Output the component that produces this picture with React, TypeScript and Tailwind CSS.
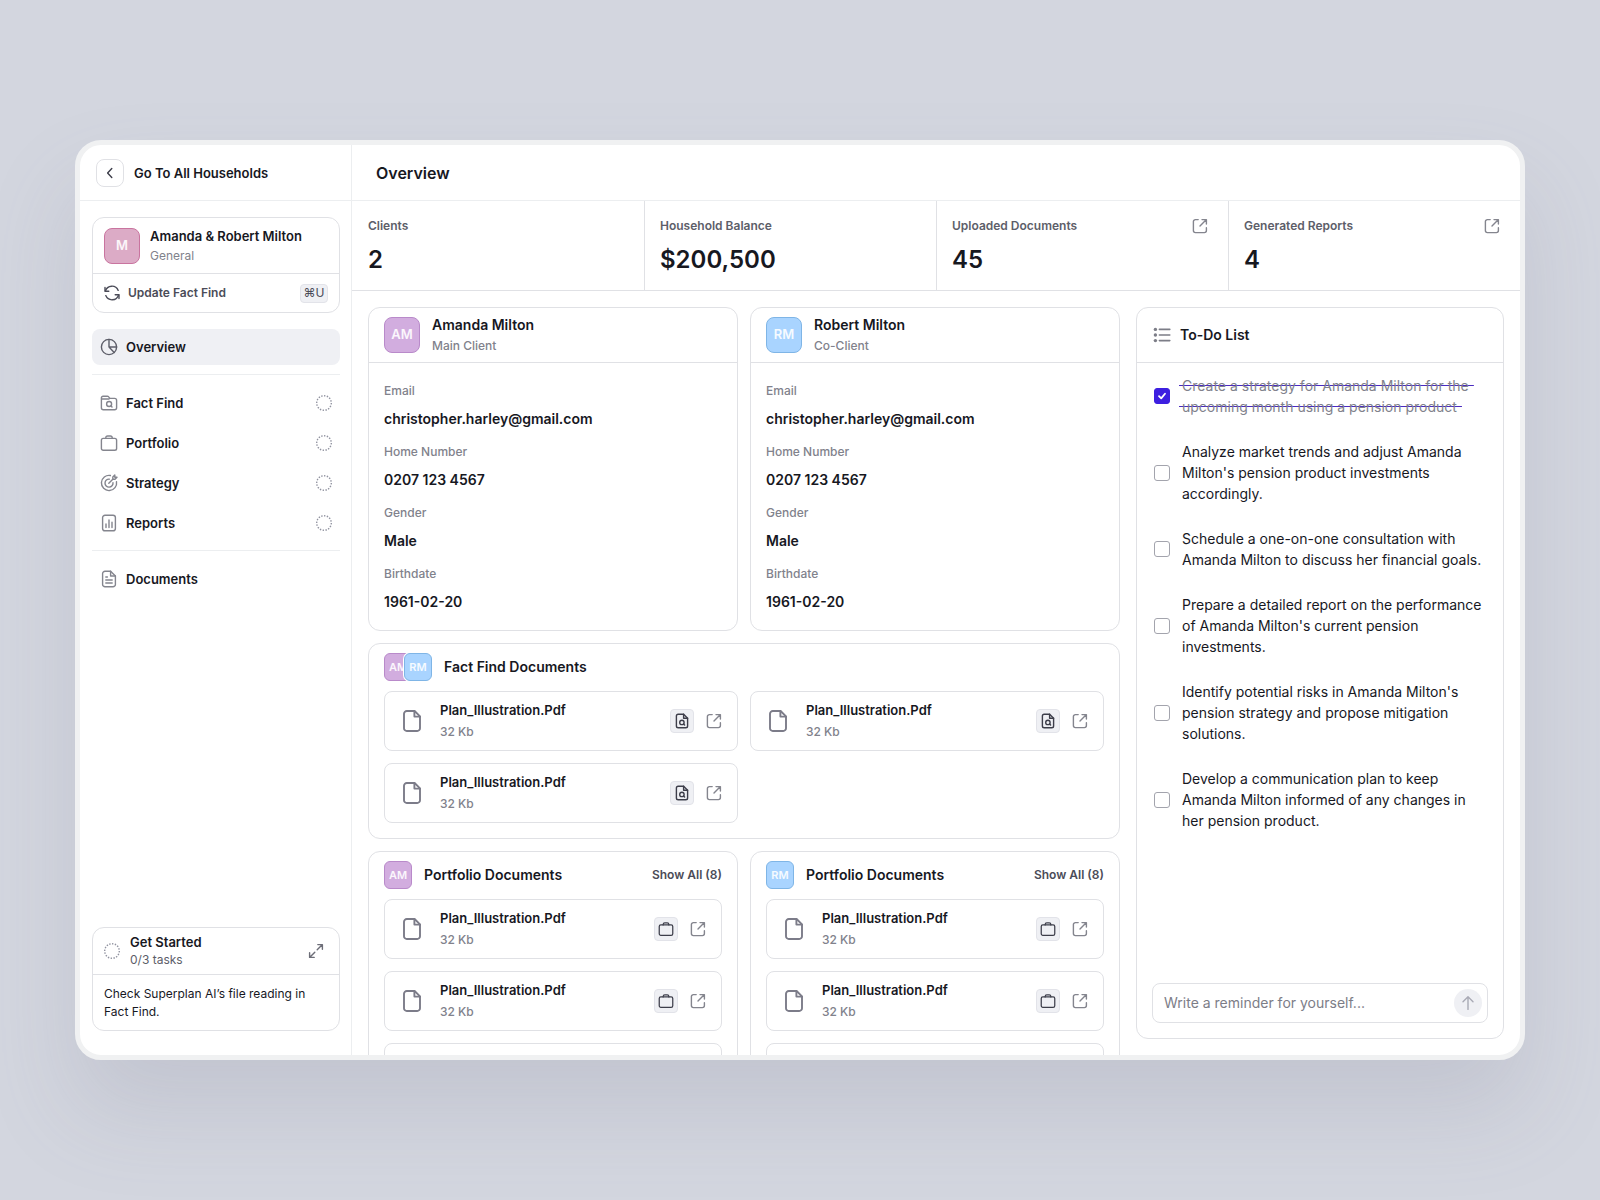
import React, { useState } from 'react';

type IconProps = { className?: string };

const Svg: React.FC<IconProps & { box?: number; stroke?: number; children: React.ReactNode }> = ({
  className = '',
  box = 16,
  stroke = 1.4,
  children,
}) => (
  <svg
    viewBox={`0 0 ${box} ${box}`}
    fill="none"
    stroke="currentColor"
    strokeWidth={stroke}
    strokeLinecap="round"
    strokeLinejoin="round"
    aria-hidden="true"
    className={`shrink-0 ${className}`}
  >
    {children}
  </svg>
);

const Icons = {
  Back: () => (
    <Svg className="size-4" stroke={1.4}>
      <path d="M9.8 3.5 5.6 8l4.2 4.5" />
    </Svg>
  ),
  Refresh: () => (
    <Svg className="size-4">
      <path d="M1 2.4v3.8h3.8" />
      <path d="M1.4 6A6.8 6.8 0 0 1 14.2 5.400" />
      <path d="M15 13.600V9.800h-3.800" />
      <path d="M14.600 10A6.800 6.800 0 0 1 1.800 10.600" />
    </Svg>
  ),
  Pie: () => (
    <Svg className="size-[18px]" box={18}>
      <circle cx="9" cy="9" r="7.6" />
      <path d="M9 1.4V9h7.6M9 9l5.2 5.4" />
    </Svg>
  ),
  FolderSearch: () => (
    <Svg className="size-[18px]" box={18}>
      <path d="M1.4 4.6v9.2a2 2 0 0 0 2 2h11.2a2 2 0 0 0 2-2V6.4a2 2 0 0 0-2-2H10L8.4 2.6a1.4 1.4 0 0 0-1-.4H3A1.6 1.6 0 0 0 1.4 3.8V5H9" />
      <circle cx="9.1" cy="10" r="2.5" />
      <path d="m11 12 1 1" />
    </Svg>
  ),
  Briefcase: ({ className = 'size-[18px]' }: IconProps) => (
    <Svg className={className} box={18}>
      <rect x="1.4" y="4.4" width="15.2" height="11.8" rx="1.8" />
      <path d="M5.8 4.4v-.6A1.8 1.8 0 0 1 7.6 2h2.8a1.8 1.800 0 0 1 1.800 1.800v.6" />
    </Svg>
  ),
  Target: () => (
    <Svg className="size-[18px]" box={18}>
      <path d="M10.400 1.500A7.600 7.600 0 1 0 16.500 7.600" />
      <path d="M9.400 5.100a4 4 0 1 0 3.600 3.600" />
      <path d="m8.800 9.200 4-4M12.800 5.200V3l2-2v2.200H17l-2 2z" />
    </Svg>
  ),
  Report: () => (
    <Svg className="size-[18px]" box={18}>
      <rect x="2.6" y="1.200" width="12.800" height="15.600" rx="2.400" />
      <path d="M6 10v3.600M9 6v7.600M12 8.200v5.400" />
    </Svg>
  ),
  Document: () => (
    <Svg className="size-[18px]" box={18}>
      <path d="M10.600 1.200H5a2.400 2.400 0 0 0-2.400 2.400v10.800A2.400 2.400 0 0 0 5 16.800h8a2.400 2.400 0 0 0 2.400-2.400V6z" />
      <path d="M10.600 1.200V6h4.800M5.800 7h1.600M5.800 10h6.400M5.800 13h6.400" />
    </Svg>
  ),
  Pending: () => (
    <svg viewBox="0 0 16 16" fill="none" aria-hidden="true" className="size-4 shrink-0 text-[#9193a0]">
      <circle cx="8" cy="8" r="7.3" stroke="currentColor" strokeWidth="1.4" pathLength="96" strokeDasharray="3 3" />
    </svg>
  ),
  Expand: () => (
    <Svg className="size-4">
      <path d="M9.8 1.6h4.6v4.6M14.2 1.8l-5 5M6.2 14.4H1.6V9.8M1.8 14.2l5-5" />
    </Svg>
  ),
  External: () => (
    <Svg className="size-4">
      <path d="M6.2 1.6H3.4a2 2 0 0 0-2 2v9a2 2 0 0 0 2 2h9a2 2 0 0 0 2-2V9.8" />
      <path d="M10 1.6h4.4V6M14.2 1.8 8 8" />
    </Svg>
  ),
  List: () => (
    <Svg className="size-[18px]" box={18} stroke={1.6}>
      <path d="M6.4 3.4h10.4M6.4 9h10.4M6.4 14.6h10.4" />
      <g fill="currentColor" stroke="none">
        <circle cx="2.4" cy="3.4" r="1.7" />
        <circle cx="2.4" cy="9" r="1.7" />
        <circle cx="2.4" cy="14.6" r="1.7" />
      </g>
    </Svg>
  ),
  File: () => (
    <Svg className="size-6 text-[#7c7c89]" box={24} stroke={1.9}>
      <path d="M14.6 2H6.8A2.8 2.8 0 0 0 4 4.8v14.4A2.8 2.8 0 0 0 6.8 22h10.4a2.8 2.8 0 0 0 2.8-2.8V7.4z" />
      <path d="M14.4 2.2v5.4H20" />
    </Svg>
  ),
  FileSearch: () => (
    <Svg className="size-4">
      <path d="M9.6 1.2H4.2A1.8 1.8 0 0 0 2.4 3v10a1.8 1.8 0 0 0 1.8 1.8h7.6a1.800 1.800 0 0 0 1.800-1.800V5.200z" />
      <path d="M9.600 1.200v4h4" />
      <circle cx="7.900" cy="9.400" r="2.200" />
      <path d="m9.600 11.100 1 1" />
    </Svg>
  ),
  ArrowUp: () => (
    <Svg className="size-4">
      <path d="M8 14.400V2M3 6.800l5-5 5 5" />
    </Svg>
  ),
};

const NAV_ITEMS = [
  { label: 'Fact Find', icon: <Icons.FolderSearch /> },
  { label: 'Portfolio', icon: <Icons.Briefcase /> },
  { label: 'Strategy', icon: <Icons.Target /> },
  { label: 'Reports', icon: <Icons.Report /> },
];

const STATS = [
  { label: 'Clients', value: '2', link: false },
  { label: 'Household Balance', value: '$200,500', link: false },
  { label: 'Uploaded Documents', value: '45', link: true },
  { label: 'Generated Reports', value: '4', link: true },
];

const CLIENTS = [
  { initials: 'AM', name: 'Amanda Milton', role: 'Main Client' },
  { initials: 'RM', name: 'Robert Milton', role: 'Co-Client' },
];

const FIELDS = [
  { label: 'Email', value: 'christopher.harley@gmail.com' },
  { label: 'Home Number', value: '0207 123 4567' },
  { label: 'Gender', value: 'Male' },
  { label: 'Birthdate', value: '1961-02-20' },
];

const TODOS = [
  { text: 'Create a strategy for Amanda Milton for the upcoming month using a pension product', done: true },
  { text: "Analyze market trends and adjust Amanda Milton's pension product investments accordingly.", done: false },
  { text: 'Schedule a one-on-one consultation with Amanda Milton to discuss her financial goals.', done: false },
  { text: "Prepare a detailed report on the performance of Amanda Milton's current pension investments.", done: false },
  { text: "Identify potential risks in Amanda Milton's pension strategy and propose mitigation solutions.", done: false },
  { text: 'Develop a communication plan to keep Amanda Milton informed of any changes in her pension product.', done: false },
];

const AVATAR_COLORS: Record<string, string> = {
  M: 'bg-[#dcabc6] border-[#c9749f]',
  AM: 'bg-[#d2addf] border-[#b98aca]',
  RM: 'bg-[#a9d4ff] border-[#7fb5e6]',
};

const Avatar: React.FC<{ initials: string; small?: boolean; className?: string }> = ({ initials, small, className = '' }) => (
  <span
    className={`flex shrink-0 items-center justify-center border font-semibold text-white/90 ${
      small ? 'size-7 rounded-md text-[11px]' : 'size-9 rounded-lg text-[13px]'
    } ${AVATAR_COLORS[initials]} ${className}`}
  >
    {initials}
  </span>
);

const FileCard: React.FC<{ kind: 'search' | 'portfolio' }> = ({ kind }) => (
  <li className="flex h-[60px] shrink-0 items-center rounded-lg border border-[#e0e1e5] px-[15px]">
    <Icons.File />
    <div className="ml-4 min-w-0 flex-1">
      <p className="text-[13px] leading-[21px] font-semibold">Plan_Illustration.Pdf</p>
      <p className="text-[12px] leading-[21px] font-medium text-[#81828c]">32 Kb</p>
    </div>
    <button
      aria-label={kind === 'search' ? 'Preview file' : 'Open in portfolio'}
      className="flex size-6 items-center justify-center rounded border border-[#e2e3e9] bg-[#eff0f4] text-[#3d3e4a]"
    >
      {kind === 'search' ? <Icons.FileSearch /> : <Icons.Briefcase className="size-4" />}
    </button>
    <button aria-label="Open file" className="ml-3 text-[#84858e]">
      <Icons.External />
    </button>
  </li>
);

const Sidebar: React.FC = () => (
  <aside className="flex w-[272px] shrink-0 flex-col border-r border-[#eceef0]">
    <div className="flex h-14 shrink-0 items-center gap-[10px] border-b border-[#eceef0] pl-4">
      <button aria-label="Back" className="flex size-7 items-center justify-center rounded-lg border border-[#e0e1e5] text-[#3d3e4a]">
        <Icons.Back />
      </button>
      <span className="text-[13px] leading-5 font-semibold">Go To All Households</span>
    </div>

    <div className="flex flex-1 flex-col px-3 pt-4 pr-[11px] pb-6">
      <div className="rounded-xl border border-[#e0e1e5]">
        <div className="flex h-14 items-center gap-[10px] border-b border-[#e0e1e5] px-[11px]">
          <Avatar initials="M" />
          <div>
            <p className="text-[13px] leading-5 font-semibold">Amanda &amp; Robert Milton</p>
            <p className="text-[12px] leading-5 text-[#81828c]">General</p>
          </div>
        </div>
        <button className="flex h-[38px] w-full items-center gap-2 px-[11px] text-[#4b4c58]">
          <Icons.Refresh />
          <span className="text-[12px] leading-5 font-semibold">Update Fact Find</span>
          <kbd className="ml-auto flex h-[19px] w-7 items-center justify-center rounded border border-[#e2e3e9] bg-[#eff0f4] font-[Inter,sans-serif] text-[12px]">
            ⌘U
          </kbd>
        </button>
      </div>

      <nav className="mt-4 flex flex-col text-[13px] leading-5 font-semibold">
        <a href="#overview" className="flex h-9 items-center gap-2 rounded-lg bg-[#eff0f4] px-2">
          <span className="text-[#5d5e69]">
            <Icons.Pie />
          </span>
          Overview
        </a>
        <div className="mt-[9px] mb-[10px] flex flex-col gap-1 border-y border-[#eceef0] pt-[10px] pb-[9px]">
          {NAV_ITEMS.map((item) => (
            <a key={item.label} href={`#${item.label}`} className="flex h-9 items-center gap-2 px-2">
              <span className="text-[#84858e]">{item.icon}</span>
              <span className="flex-1">{item.label}</span>
              <Icons.Pending />
            </a>
          ))}
        </div>
        <a href="#documents" className="flex h-9 items-center gap-2 px-2">
          <span className="text-[#84858e]">
            <Icons.Document />
          </span>
          Documents
        </a>
      </nav>

      <section className="mt-auto rounded-xl border border-[#e0e1e5]">
        <div className="flex h-[47px] items-center gap-[10px] border-b border-[#e0e1e5] px-[11px]">
          <Icons.Pending />
          <div className="flex-1">
            <h2 className="text-[13px] leading-[18px] font-semibold">Get Started</h2>
            <p className="text-[12px] leading-[18px] text-[#5d5e69]">0/3 tasks</p>
          </div>
          <button aria-label="Expand" className="mr-1 text-[#6d6e78]">
            <Icons.Expand />
          </button>
        </div>
        <p className="px-[11px] pt-[10px] pb-[9px] text-[12px] leading-[18px]">Check Superplan AI’s file reading in Fact Find.</p>
      </section>
    </div>
  </aside>
);

const ClientCard: React.FC<{ client: (typeof CLIENTS)[number] }> = ({ client }) => (
  <section className="rounded-xl border border-[#e0e1e5]">
    <div className="flex h-[55px] items-center gap-3 border-b border-[#e0e1e5] px-[15px]">
      <Avatar initials={client.initials} />
      <div>
        <h2 className="text-[14px] leading-5 font-semibold">{client.name}</h2>
        <p className="text-[12px] leading-[21px] font-medium text-[#81828c]">{client.role}</p>
      </div>
    </div>
    <dl className="flex flex-col gap-[13px] px-[15px] py-[18px]">
      {FIELDS.map((field) => (
        <div key={field.label}>
          <dt className="text-[12px] leading-5 font-medium text-[#81828c]">{field.label}</dt>
          <dd className="mt-2 text-[14px] leading-5 font-semibold">{field.value}</dd>
        </div>
      ))}
    </dl>
  </section>
);

const TodoPanel: React.FC = () => {
  const [done, setDone] = useState(() => TODOS.map((todo) => todo.done));
  const [reminder, setReminder] = useState('');

  const toggle = (index: number) => {
    setDone((prev) => prev.map((value, i) => (i === index ? !value : value)));
  };

  return (
    <section className="mb-4 flex w-[368px] shrink-0 flex-col rounded-xl border border-[#e0e1e5]">
      <div className="flex h-[55px] shrink-0 items-center gap-[9px] border-b border-[#e0e1e5] px-4 text-[#7c7d87]">
        <Icons.List />
        <h2 className="text-[14px] leading-5 font-semibold text-[#17181f]">To-Do List</h2>
      </div>
      <ul className="flex flex-1 flex-col gap-6 overflow-hidden pt-3 pr-4 pl-[17px]">
        {TODOS.map((todo, i) => (
          <li key={todo.text}>
            <label className="flex items-center gap-3">
              <span className="relative flex size-4 shrink-0">
                <input
                  type="checkbox"
                  checked={done[i]}
                  onChange={() => toggle(i)}
                  className="size-4 appearance-none rounded-[3px] border border-[#a3a4ad] checked:border-[#3d1fe0] checked:bg-[#3d1fe0]"
                />
                {done[i] && (
                  <Svg className="pointer-events-none absolute inset-0 size-4 text-white" stroke={1.8}>
                    <path d="m5 8.2 2.2 2.2L11 5.8" />
                  </Svg>
                )}
              </span>
              <span className="text-[14px] leading-[21px]">
                {done[i] ? (
                  <del className="-ml-[3px] box-decoration-clone bg-[linear-gradient(#4a2bc0,#4a2bc0)] bg-[length:100%_1px] bg-center bg-no-repeat pr-[5px] pl-[3px] text-[#81828c] no-underline">
                    {todo.text}
                  </del>
                ) : (
                  todo.text
                )}
              </span>
            </label>
          </li>
        ))}
      </ul>
      <form
        onSubmit={(e) => e.preventDefault()}
        className="m-[15px] flex h-10 shrink-0 items-center rounded-lg border border-[#e0e1e5] pr-[5px] pl-[11px]"
      >
        <input
          type="text"
          aria-label="Reminder"
          placeholder="Write a reminder for yourself..."
          value={reminder}
          onChange={(e) => setReminder(e.target.value)}
          className="h-5 min-w-0 flex-1 text-[14px] leading-5 outline-none placeholder:text-[#7c7d87]"
        />
        <button aria-label="Add reminder" className="flex size-7 items-center justify-center rounded-full bg-[#eff0f4] text-[#a9aab5]">
          <Icons.ArrowUp />
        </button>
      </form>
    </section>
  );
};

const App: React.FC = () => (
  <div className="flex h-screen bg-[#d3d6df] px-[75px] py-[140px] font-[Inter,sans-serif] text-[#17181f]">
    <div className="flex min-w-0 flex-1 overflow-hidden rounded-[26px] border-[5px] border-[#f0f1f2] bg-white shadow-[0_50px_90px_rgba(110,114,135,0.17)]">
      <Sidebar />
      <main className="flex min-w-0 flex-1 flex-col">
        <header className="flex h-14 shrink-0 items-center border-b border-[#eceef0] px-6">
          <h1 className="text-[16px] font-semibold">Overview</h1>
        </header>

        <div className="grid h-[90px] shrink-0 grid-cols-4 border-b border-[#e0e1e5]">
          {STATS.map((stat) => (
            <div key={stat.label} className="border-l border-[#e0e1e5] pt-[15px] pr-5 pl-[15px] first:border-l-0 first:pl-4">
              <div className="flex h-5 items-center justify-between text-[#5d5e69]">
                <span className="text-[12px] font-semibold">{stat.label}</span>
                {stat.link && (
                  <button aria-label={`Open ${stat.label}`} className="text-[#84858e]">
                    <Icons.External />
                  </button>
                )}
              </div>
              <p className="mt-2 text-[24px] leading-8 font-semibold">{stat.value}</p>
            </div>
          ))}
        </div>

        <div className="flex min-h-0 flex-1 gap-4 px-4 pt-4">
          <div className="flex min-w-0 flex-1 flex-col gap-3 overflow-y-auto [scrollbar-width:none]">
            <div className="grid shrink-0 grid-cols-2 gap-3">
              {CLIENTS.map((client) => (
                <ClientCard key={client.initials} client={client} />
              ))}
            </div>

            <section className="shrink-0 rounded-xl border border-[#e0e1e5] px-[15px] pb-[15px]">
              <div className="flex items-center pt-[9px] pb-[10px]">
                <Avatar initials="AM" small />
                <Avatar initials="RM" small className="-ml-2 ring-1 ring-white" />
                <h2 className="ml-3 text-[14px] leading-5 font-semibold">Fact Find Documents</h2>
              </div>
              <ul className="grid grid-cols-2 gap-3">
                <FileCard kind="search" />
                <FileCard kind="search" />
                <FileCard kind="search" />
              </ul>
            </section>

            <div className="grid shrink-0 grid-cols-2 gap-3">
              {CLIENTS.map((client) => (
                <section key={client.initials} className="rounded-xl border border-[#e0e1e5] px-[15px] pb-[15px]">
                  <div className="flex items-center gap-3 pt-[9px] pb-[10px]">
                    <Avatar initials={client.initials} small />
                    <h2 className="flex-1 text-[14px] leading-5 font-semibold">Portfolio Documents</h2>
                    <button className="text-[12px] leading-5 font-semibold text-[#4b4c58]">Show All (8)</button>
                  </div>
                  <ul className="flex flex-col gap-3">
                    <FileCard kind="portfolio" />
                    <FileCard kind="portfolio" />
                    <FileCard kind="portfolio" />
                  </ul>
                </section>
              ))}
            </div>
          </div>
          <TodoPanel />
        </div>
      </main>
    </div>
  </div>
);

export default App;
